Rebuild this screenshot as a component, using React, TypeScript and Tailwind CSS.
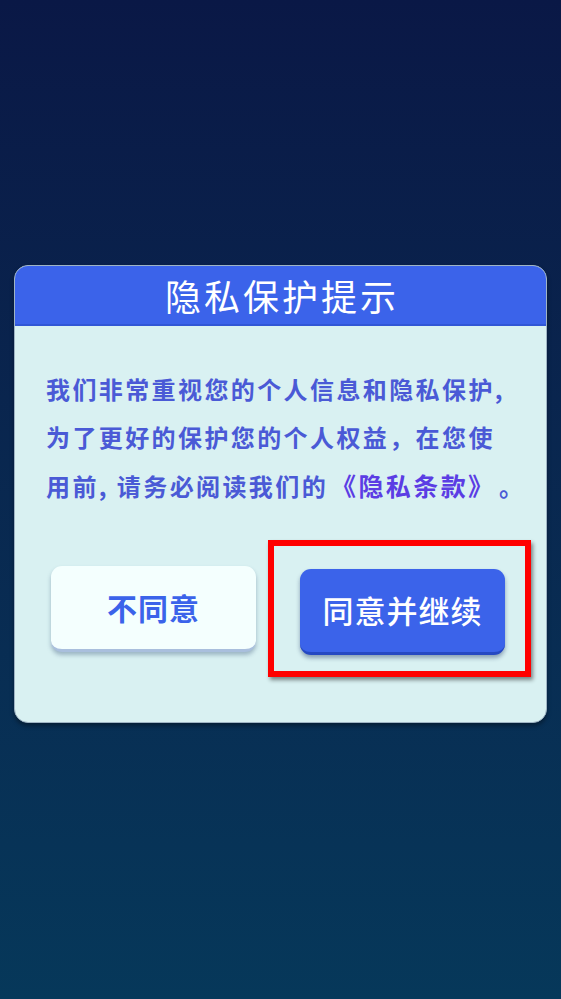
const FONT = "font-['Noto_Sans_CJK_SC','Noto_Sans',sans-serif]";

export default function App() {
  return (
    <div className={`min-h-[999px] w-full bg-gradient-to-b from-[#0a1846] to-[#06385a] pt-[265px] px-[14px] ${FONT}`}>
      <div className="w-[533px] rounded-[14px] bg-[#d9f1f2] border border-[#9fb4c4] overflow-hidden shadow-[0_3px_4px_rgba(0,0,0,0.35)]">
        <div className="h-[60px] bg-[#3b63ea] border-b-2 border-[#3157d6] flex items-center justify-center">
          <h1 className="text-[36px] leading-none text-white tracking-[3px] font-normal pl-[3px]">隐私保护提示</h1>
        </div>
        <div className="px-[31px] pt-[39px] pb-[45px]">
          <div className="text-[24px] leading-[48px] font-bold text-[#4a5ad6] tracking-[2.4px] whitespace-nowrap">
            <p>我们非常重视您的个人信息和隐私保护,</p>
            <p>为了更好的保护您的个人权益，在您使</p>
            <p>
              用前, 请务必阅读我们的
              <span className="ml-[3px] text-[25px] text-[#5b3de4]">《隐私条款》</span>
              <span className="ml-[16px]">。</span>
            </p>
          </div>
          <div className="mt-[30px] flex items-center">
            <button className="shrink-0 ml-[5px] w-[205px] h-[86px] rounded-[11px] bg-[#f4fffe] border-b-[3px] border-[#a9bfdd] shadow-[0_3px_4px_rgba(40,70,110,0.35)] text-[30px] font-semibold text-[#3b63ea] tracking-[1px]">
              不同意
            </button>
            <div className="shrink-0 ml-[12px] pt-[23px] pl-[26px] pr-[20px] pb-[16px] border-[6px] border-[#ff0000] shadow-[2px_3px_4px_rgba(0,0,0,0.45)]">
              <button className="block w-[205px] h-[86px] rounded-[11px] bg-[#3b63ea] border-b-[3px] border-[#2548c2] shadow-[0_3px_4px_rgba(20,40,90,0.4)] text-[31px] font-medium text-white tracking-[1px]">
                同意并继续
              </button>
            </div>
          </div>
        </div>
      </div>
    </div>
  );
}
